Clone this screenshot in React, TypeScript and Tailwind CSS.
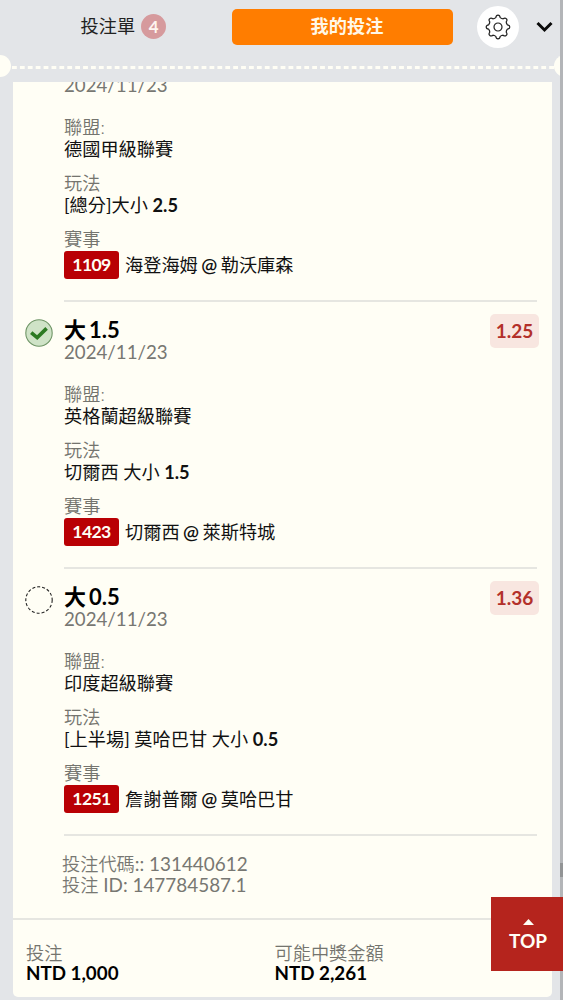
import type { ReactNode } from "react";

type Leg = {
  title?: [string, string];
  date: string;
  league: string;
  play: ReactNode;
  code: string;
  teams: [string, string];
  odds?: string;
  won?: boolean;
};

const legs: Leg[] = [
  {
    date: "2024/11/23",
    league: "德國甲級聯賽",
    play: (
      <>
        [總分]大小 <b>2.5</b>
      </>
    ),
    code: "1109",
    teams: ["海登海姆", "勒沃庫森"],
  },
  {
    title: ["大", "1.5"],
    date: "2024/11/23",
    league: "英格蘭超級聯賽",
    play: (
      <>
        切爾西 大小 <b>1.5</b>
      </>
    ),
    code: "1423",
    teams: ["切爾西", "萊斯特城"],
    odds: "1.25",
    won: true,
  },
  {
    title: ["大", "0.5"],
    date: "2024/11/23",
    league: "印度超級聯賽",
    play: (
      <>
        [上半場] 莫哈巴甘 大小 <b>0.5</b>
      </>
    ),
    code: "1251",
    teams: ["詹謝普爾", "莫哈巴甘"],
    odds: "1.36",
    won: false,
  },
];

const GearIcon = () => (
  <svg width="26" height="26" viewBox="-13 -13 26 26" fill="none" stroke="#222" strokeWidth="1.2" strokeLinejoin="round">
    <path d="M-2.2 -9.4 Q-1.9 -11.8 0 -11.8 Q1.9 -11.8 2.2 -9.4 Q3.6 -8.3 5.1 -8.2 Q7 -9.7 8.3 -8.3 Q9.7 -7 8.2 -5.1 Q8.3 -3.6 9.4 -2.2 Q11.8 -1.9 11.8 0 Q11.8 1.9 9.4 2.2 Q8.3 3.6 8.2 5.1 Q9.7 7 8.3 8.3 Q7 9.7 5.1 8.2 Q3.6 8.3 2.2 9.4 Q1.9 11.8 0 11.8 Q-1.9 11.8 -2.2 9.4 Q-3.6 8.3 -5.1 8.2 Q-7 9.7 -8.3 8.3 Q-9.7 7 -8.2 5.1 Q-8.3 3.6 -9.4 2.2 Q-11.8 1.9 -11.8 0 Q-11.8 -1.9 -9.4 -2.2 Q-8.3 -3.6 -8.2 -5.1 Q-9.7 -7 -8.3 -8.3 Q-7 -9.7 -5.1 -8.2 Q-3.6 -8.3 -2.2 -9.4Z" />
    <circle r="4" />
  </svg>
);

const StatusIcon = ({ won }: { won?: boolean }) =>
  won ? (
    <svg width="28" height="28" viewBox="0 0 28 28" fill="none">
      <circle cx="14" cy="14" r="13.2" fill="#cfe3c7" stroke="#6f9566" strokeWidth="1.1" />
      <path d="M6.2 13.6l6 5 9.4-9.2" stroke="#2c7a22" strokeWidth="3.6" />
    </svg>
  ) : (
    <svg width="28" height="28" viewBox="0 0 28 28" fill="none">
      <circle cx="14" cy="14" r="13.2" stroke="#222" strokeWidth="1.1" strokeDasharray="3 2" />
    </svg>
  );

const Field = ({ label, children }: { label: string; children: ReactNode }) => (
  <div className="mb-[11.7px]">
    <div className="font-[350] text-[#74746e]">{label}</div>
    <div className="text-[#111]">{children}</div>
  </div>
);

const LegRow = ({ leg }: { leg: Leg }) => (
  <div className="flex">
    <div className="w-[51px] shrink-0 pl-3 pt-[17px]">{leg.title && <StatusIcon won={leg.won} />}</div>
    <div className="mr-[15.5px] flex-1 border-b-2 border-[#e6e6e1] pt-[17px] pb-[20.5px] leading-[22.3px]">
      <div className="relative">
        <div className="flex h-[22.3px] gap-[3px] text-[22px] font-bold text-black">
          {leg.title && (
            <>
              <span>{leg.title[0]}</span>
              <span>{leg.title[1]}</span>
            </>
          )}
        </div>
        {leg.odds && (
          <span className="absolute -top-[5px] -right-[2.5px] flex h-[34px] w-[49px] items-center justify-center rounded-[5px] bg-[#f8e6e0] text-[19px] font-bold text-[#b3302a]">
            {leg.odds}
          </span>
        )}
      </div>
      <div className="mb-[19px] text-[18.7px] text-[#777772]">{leg.date}</div>
      <Field label="聯盟:">{leg.league}</Field>
      <Field label="玩法">{leg.play}</Field>
      <div className="font-[350] text-[#74746e]">賽事</div>
      <div className="mt-px flex h-7 items-center gap-[6px] text-[#111]">
        <span className="flex h-7 w-[55px] items-center justify-center rounded-[3px] bg-[#b90004] text-[17.6px] font-bold tracking-[-0.6px] text-[#fffef5]">
          {leg.code}
        </span>
        <span className="flex gap-[3.5px]">
          <span>{leg.teams[0]}</span>
          <span className="text-[19px] font-semibold">@</span>
          <span>{leg.teams[1]}</span>
        </span>
      </div>
    </div>
  </div>
);

const App = () => {
  return (
    <div className="relative flex h-[1000px] w-[563px] flex-col overflow-hidden bg-[#e3e5e8] font-[Lato,'Noto_Sans_CJK_TC',sans-serif] text-[18.2px]">
      {/* tabs */}
      <header className="flex h-[53px] shrink-0 items-center">
        <div className="flex w-[232px] items-center gap-[6px] pl-[80.5px] text-[#222]">
          投注單
          <span className="flex size-[25px] items-center justify-center rounded-full bg-[#d69a9d] text-[17px] font-bold text-[#fff5f0]">
            4
          </span>
        </div>
        <button className="h-9 w-[221px] rounded-[5px] bg-[#ff7d00] pl-[9px] font-bold text-[#fff8e8]">我的投注</button>
        <div className="ml-6 flex size-[42px] items-center justify-center rounded-full bg-white">
          <GearIcon />
        </div>
        <svg className="mt-px ml-[17px]" width="17" height="12" viewBox="0 0 17 12" fill="none" stroke="#0a0a0a" strokeWidth="3">
          <path d="M1.5 2l7 7 7-7" />
        </svg>
      </header>

      {/* ticket perforation */}
      <div className="flex h-[29px] shrink-0 items-start">
        <div className="-ml-[11px] mt-[2px] size-[22px] shrink-0 rounded-full bg-[#fffef5]" />
        <svg className="mt-[13px] shrink-0" width="543" height="3">
          <line x1="1" y1="1.5" x2="543" y2="1.5" stroke="#fffef5" strokeWidth="3" strokeDasharray="4.8 3.1" />
        </svg>
        <div className="mt-[2px] size-[22px] shrink-0 rounded-full bg-[#fffef5]" />
      </div>

      {/* slip */}
      <main className="ml-[13px] flex h-[914.5px] w-[539px] shrink-0 flex-col overflow-hidden rounded-b-[5px] bg-[#fffef5]">
        <div className="-mt-[47px]">
          {legs.map((leg) => (
            <LegRow key={leg.code} leg={leg} />
          ))}
        </div>
        <div className="pt-[17px] pl-[49px] text-[18.9px] leading-[21px] text-[#777772]">
          <p className="h-[21px]">
            <span className="text-[18.2px] font-[350]">投注代碼</span>:: 131440612
          </p>
          <p className="h-[21px]">
            <span className="text-[18.2px] font-[350]">投注</span> ID: 147784587.1
          </p>
        </div>
        <div className="mt-auto flex h-[79px] border-t-2 border-[#e6e6e1] pt-[23px] pl-[13px] leading-[20.5px]">
          <div className="w-[248.5px]">
            <div className="font-[350] text-[#74746e]">投注</div>
            <div className="text-[18.8px] font-bold text-black">NTD 1,000</div>
          </div>
          <div>
            <div className="font-[350] text-[#74746e]">可能中獎金額</div>
            <div className="text-[18.8px] font-bold text-black">NTD 2,261</div>
          </div>
        </div>
      </main>

      {/* scrollbar */}
      <div className="absolute top-0 right-0 h-full w-[3px] bg-[#b3b5b8]">
        <div className="mt-[863px] h-[14px] bg-[#929496]" />
      </div>

      <button className="absolute top-[897px] right-0 flex h-[74px] w-[72px] flex-col items-center bg-[#b5241d] pt-[22px] pl-[2px] font-bold text-[#fffef5]">
        <svg width="11" height="6" viewBox="0 0 11 6" fill="currentColor">
          <path d="M5.5 0L11 6H0z" />
        </svg>
        <span className="mt-[3px] text-[19px] leading-[26px]">TOP</span>
      </button>
    </div>
  );
};

export default App;
